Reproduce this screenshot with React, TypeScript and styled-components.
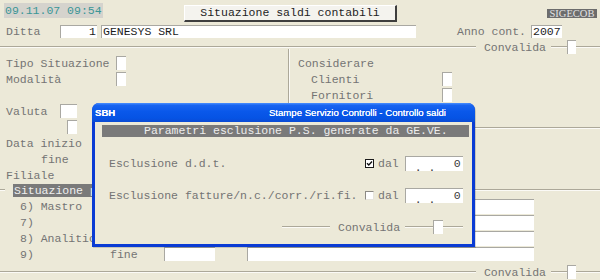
import styled, { createGlobalStyle } from "styled-components"

const GlobalStyle = createGlobalStyle`
  html, body {
    margin: 0;
    padding: 0;
    background: #ece9d8;
  }
  body {
    font-family: "Liberation Mono", "Courier New", monospace;
    font-size: 11.5px;
    color: #747474;
  }
`

const Screen = styled.div`
  position: relative;
  width: 600px;
  height: 280px;
  overflow: hidden;
  background: #ece9d8;
  display: flex;
  flex-direction: column;
`

const TopBar = styled.div`
  display: flex;
  align-items: flex-start;
  height: 24px;
  flex-shrink: 0;
`

const Clock = styled.div`
  margin: 3px 0 0 4px;
  width: 99px;
  height: 15px;
  line-height: 15px;
  padding-left: 1px;
  box-sizing: border-box;
  background: #d5d3cd;
  color: #3a9696;
  white-space: pre;
`

const TitleButton = styled.div`
  margin: 5px 0 0 81px;
  width: 213px;
  height: 17px;
  box-sizing: border-box;
  background: #f4f3ee;
  border-top: 1px solid #ffffff;
  border-left: 1px solid #ffffff;
  border-right: 2px solid #3e3e3e;
  border-bottom: 2px solid #3e3e3e;
  color: #1e1e1e;
  text-align: center;
  line-height: 14px;
  white-space: pre;
`

const AppTag = styled.div`
  margin: 9px 3px 0 auto;
  width: 50px;
  height: 9px;
  background: #6c6c6c;
  color: #e2e2e2;
  font-family: "Liberation Serif", serif;
  font-size: 10.5px;
  line-height: 9px;
  text-align: center;
  overflow: hidden;
`

const Row = styled.div<{ $h?: number; $indent?: number; $top?: number }>`
  display: flex;
  align-items: center;
  flex-shrink: 0;
  height: ${({ $h }) => $h ?? 16}px;
  padding-left: ${({ $indent }) => $indent ?? 0}px;
  margin-top: ${({ $top }) => $top ?? 0}px;
`

const Label = styled.span<{ $w?: number; $gap?: number }>`
  flex-shrink: 0;
  white-space: pre;
  width: ${({ $w }) => ($w ? `${$w}px` : "auto")};
  margin-left: ${({ $gap }) => $gap ?? 0}px;
`

const Field = styled.div<{ $w: number; $h?: number; $gap?: number; $right?: boolean }>`
  flex-shrink: 0;
  box-sizing: border-box;
  width: ${({ $w }) => $w}px;
  height: ${({ $h }) => $h ?? 13}px;
  line-height: ${({ $h }) => ($h ?? 13) - 1}px;
  margin-left: ${({ $gap }) => $gap ?? 0}px;
  background: #ffffff;
  border-top: 1px solid #a9a8a2;
  border-left: 1px solid #a9a8a2;
  color: #1c1c1c;
  text-align: ${({ $right }) => ($right ? "right" : "left")};
  padding: 0 1px;
  overflow: hidden;
  white-space: pre;
`

const Rule = styled.div<{ $w?: number }>`
  flex: ${({ $w }) => ($w ? `0 0 ${$w}px` : "1 1 auto")};
  height: 0;
  border-top: 1px solid #aca899;
  border-bottom: 1px solid #fbfaf6;
`

const ConfirmBar = styled.div<{ $indent?: number; $top?: number }>`
  display: flex;
  align-items: center;
  flex-shrink: 0;
  height: 14px;
  margin-top: ${({ $top }) => $top ?? 0}px;
  padding-left: ${({ $indent }) => $indent ?? 0}px;
`

const ConfirmLabel = styled.span`
  margin: 0 5px 0 8px;
  white-space: pre;
`

const Upper = styled.div`
  display: flex;
  align-items: flex-start;
  height: 129px;
  flex-shrink: 0;
`

const LeftCol = styled.div`
  width: 288px;
  flex-shrink: 0;
  padding: 1px 0 0 6px;
  box-sizing: border-box;
  display: flex;
  flex-direction: column;
`

const RightCol = styled.div`
  flex: 1;
  margin-top: -5px;
  height: 79px;
  box-sizing: border-box;
  padding: 6px 0 0 9px;
  border-left: 1px solid #aca899;
  border-bottom: 1px solid #aca899;
  box-shadow: inset 1px 0 #fbfaf6, 0 1px #fbfaf6;
  display: flex;
  flex-direction: column;
`

const GroupHead = styled.div`
  display: flex;
  align-items: center;
  height: 14px;
  flex-shrink: 0;
`

const GroupTag = styled.span`
  flex-shrink: 0;
  width: 79px;
  margin-left: 8px;
  height: 13px;
  line-height: 13px;
  padding: 0 1px;
  box-sizing: border-box;
  background: #7a7a7a;
  color: #efefef;
  white-space: pre;
  overflow: hidden;
`

const RowList = styled.div`
  display: flex;
  flex-direction: column;
  margin-top: 1px;
  padding-left: 20px;
`

/* dialog window lying over the form */

const Dialog = styled.div`
  position: absolute;
  left: 92px;
  top: 103px;
  width: 383px;
  height: 144px;
  box-sizing: border-box;
  display: flex;
  flex-direction: column;
  padding: 0 3px 3px;
  background: #0a3bd4;
  border-radius: 7px 7px 0 0;
  box-shadow: 1px 1px 0 rgba(0, 0, 0, 0.15);
`

const DialogTitle = styled.div`
  display: flex;
  align-items: center;
  height: 19px;
  flex-shrink: 0;
  margin: 0 -3px;
  padding: 0 29px 0 3px;
  border-radius: 7px 7px 0 0;
  background: linear-gradient(#4a90ff 0%, #1864f0 12%, #0a58ea 45%, #0653e4 80%, #0b4bd4 100%);
  color: #ffffff;
  font-family: "Liberation Sans", Arial, sans-serif;
  font-size: 9.6px;
  text-shadow: 0 0 0.4px #ffffff;
`

const TitleApp = styled.span`
  font-weight: 700;
`

const TitleText = styled.span`
  margin-left: auto;
  white-space: pre;
`

const DialogBody = styled.div`
  flex: 1;
  background: #ece9d8;
  display: flex;
  flex-direction: column;
`

const SectionBar = styled.div`
  margin: 3px 3px 0 7px;
  height: 12px;
  line-height: 12px;
  padding-left: 42px;
  background: #7a7a7a;
  color: #ededed;
  white-space: pre;
`

const Check = styled.span<{ $on?: boolean }>`
  flex-shrink: 0;
  display: flex;
  width: 9px;
  height: 9px;
  box-sizing: border-box;
  background: #ffffff;
  border: 1px solid ${({ $on }) => ($on ? "#1a1a1a" : "#e6e4dc")};
  border-top-color: ${({ $on }) => ($on ? "#1a1a1a" : "#8c8a84")};
  border-left-color: ${({ $on }) => ($on ? "#1a1a1a" : "#8c8a84")};
`

const DateField = styled.div`
  flex-shrink: 0;
  display: flex;
  align-items: flex-start;
  box-sizing: border-box;
  width: 58px;
  height: 15px;
  margin-left: 6px;
  background: #ffffff;
  border-top: 1px solid #a9a8a2;
  border-left: 1px solid #a9a8a2;
  color: #3a3a3a;
  overflow: hidden;
  line-height: 14px;
`

const DateMask = styled.span`
  margin-left: 9px;
  padding-top: 4px;
  white-space: pre;
`

const DateValue = styled.span`
  margin-left: auto;
  padding-right: 2px;
`

function DalField() {
  return (
    <DateField>
      <DateMask>. .</DateMask>
      <DateValue>0</DateValue>
    </DateField>
  )
}

function Convalida({ lead, short, box, tail, indent, top }: {
  lead?: number
  short: number
  box: number
  tail?: number
  indent?: number
  top?: number
}) {
  return (
    <ConfirmBar $indent={indent} $top={top}>
      <Rule $w={lead} />
      <ConfirmLabel>Convalida</ConfirmLabel>
      <Rule $w={short} />
      <Field $w={box} $h={14} />
      <Rule $w={tail} />
    </ConfirmBar>
  )
}

export default function App() {
  const levels = ["6) Mastro", "7)", "8) Analitico"]

  return (
    <Screen>
      <GlobalStyle />
      <TopBar>
        <Clock>09.11.07 09:54</Clock>
        <TitleButton>Situazione saldi contabili</TitleButton>
        <AppTag>SIGECOB</AppTag>
      </TopBar>

      <Row $h={15} $indent={6}>
        <Label $w={54}>Ditta</Label>
        <Field $w={37} $right>1</Field>
        <Field $w={315} $gap={4}>GENESYS SRL</Field>
        <Label $w={74} $gap={41}>Anno cont.</Label>
        <Field $w={31}>2007</Field>
      </Row>

      <Convalida short={16} box={9} tail={24} top={1} />

      <Upper>
        <LeftCol>
          <Row>
            <Label $w={110}>Tipo Situazione</Label>
            <Field $w={10} $h={14} />
          </Row>
          <Row>
            <Label $w={110}>Modalità</Label>
            <Field $w={10} $h={14} />
          </Row>
          <Row />
          <Row>
            <Label $w={54}>Valuta</Label>
            <Field $w={17} $h={14} />
          </Row>
          <Row $indent={61}>
            <Field $w={10} $h={14} />
          </Row>
          <Row>
            <Label>Data inizio</Label>
          </Row>
          <Row $indent={35}>
            <Label>fine</Label>
          </Row>
          <Row>
            <Label>Filiale</Label>
          </Row>
        </LeftCol>
        <RightCol>
          <Row>
            <Label>Considerare</Label>
          </Row>
          <Row $indent={13}>
            <Label $w={131}>Clienti</Label>
            <Field $w={10} $h={14} />
          </Row>
          <Row $indent={13}>
            <Label $w={131}>Fornitori</Label>
            <Field $w={10} $h={14} />
          </Row>
        </RightCol>
      </Upper>

      <GroupHead>
        <Rule $w={5} />
        <GroupTag>Situazione per livello</GroupTag>
        <Rule />
      </GroupHead>

      <RowList>
        {levels.map((lvl) => (
          <Row key={lvl}>
            <Label $w={144}>{lvl}</Label>
            <Field $w={51} $h={15} />
            <Field $w={287} $h={15} $gap={32} />
          </Row>
        ))}
        <Row>
          <Label $w={90}>9)</Label>
          <Label $w={54}>fine</Label>
          <Field $w={51} $h={14} />
          <Field $w={287} $h={14} $gap={32} />
        </Row>
      </RowList>

      <Convalida short={16} box={9} tail={24} top={3} />

      <Dialog>
        <DialogTitle>
          <TitleApp>SBH</TitleApp>
          <TitleText>Stampe Servizio Controlli - Controllo saldi</TitleText>
        </DialogTitle>
        <DialogBody>
          <SectionBar>Parametri esclusione P.S. generate da GE.VE.</SectionBar>
          <Row $indent={14} $top={18}>
            <Label $w={256}>Esclusione d.d.t.</Label>
            <Check $on>
              <svg width="7" height="7" viewBox="0 0 7 7">
                <path d="M1 3.2 L2.8 5 L6 1.6" fill="none" stroke="#111" strokeWidth="1.4" />
              </svg>
            </Check>
            <Label $gap={4}>dal</Label>
            <DalField />
          </Row>
          <Row $indent={14} $top={16}>
            <Label $w={256}>Esclusione fatture/n.c./corr./ri.fi.</Label>
            <Check />
            <Label $gap={4}>dal</Label>
            <DalField />
          </Row>
          <Convalida indent={187} lead={48} short={28} box={10} tail={20} top={17} />
        </DialogBody>
      </Dialog>
    </Screen>
  )
}
